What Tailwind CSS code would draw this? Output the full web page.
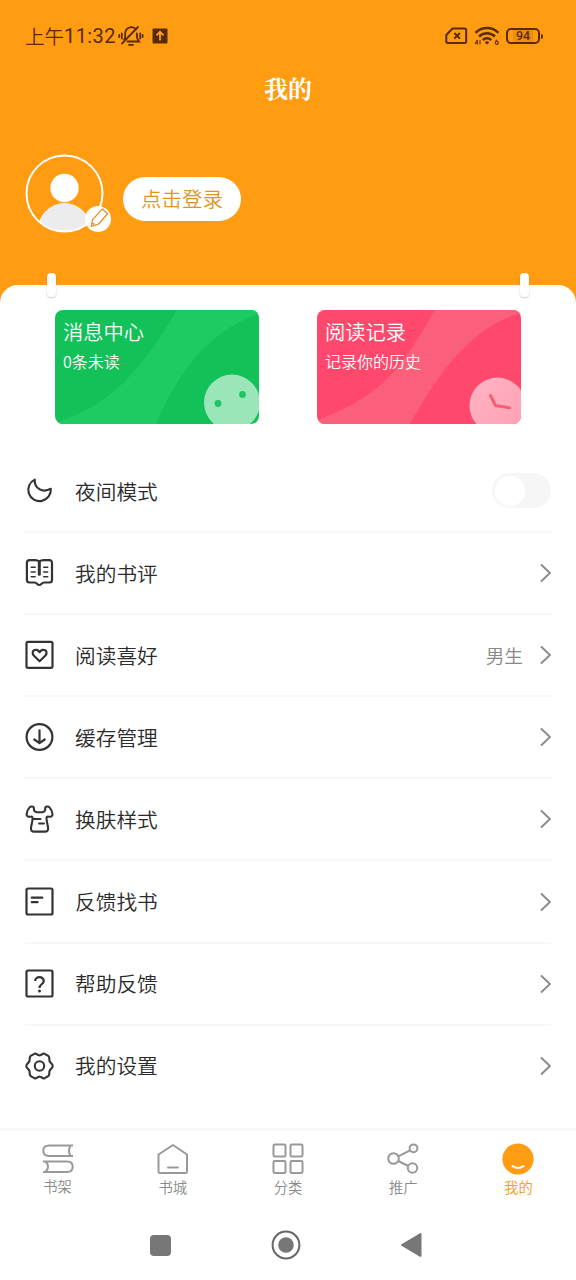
<!DOCTYPE html>
<html lang="zh-CN">
<head>
<meta charset="utf-8">
<title>我的</title>
<script src="https://cdn.jsdelivr.net/npm/@tailwindcss/browser@4"></script>
</head>
<body class="bg-[#ff9c12]">
<div class="flex h-[1280px] w-[576px] flex-col overflow-hidden bg-[#ff9c12] font-['Noto_Sans_CJK_SC',sans-serif] font-[350]">

  <header class="flex h-[285px] shrink-0 flex-col">
    <!-- status bar -->
    <div class="flex h-[72px] items-center pl-[25px] text-[#5a2a02]">
      <span class="flex w-[90px] items-center whitespace-nowrap leading-none"><span class="text-[19.5px]">上午</span><span class="font-[Roboto] text-[20px] font-normal tracking-[0.4px]">11:32</span></span>
      <svg class="ml-[3px]" width="26" height="24" viewBox="0 0 26 24" fill="none" stroke="currentColor" stroke-width="1.8" stroke-linecap="round"><path d="M6.2 15.5C8 13.5 6.800 11 7.300 8.300 8.300 3 15 1.500 18 5.500M18.800 9.500C18.600 13 19 15 21 17.500H9.500M20 3L4 19.500M11 20.800h4M3.800 9.500v5M1.200 11v2M22.200 9.500v5M24.600 11v2"/></svg>
      <svg class="ml-2" width="16" height="16" viewBox="0 0 16 16"><rect x=".5" y=".5" width="15" height="15" rx="1" fill="#5a2a02"/><path d="M8 12.500V4M4.500 7.300L8 3.800l3.500 3.500" fill="none" stroke="#ffa42a" stroke-width="1.700"/></svg>
      <svg class="ml-[277px]" width="23" height="18" viewBox="0 0 23 18" fill="none" stroke="currentColor" stroke-width="2"><path d="M7.500 1.500H19.500Q21.200 1.500 21.200 3V14.500Q21.200 16 19.500 16H3Q1.300 16 1.300 14.500V8Z" stroke-linejoin="round"/><path d="M9.300 6l5.600 5.600M14.900 6L9.300 11.600"/></svg>
      <svg class="ml-[6px]" width="27" height="20" viewBox="0 0 27 20" fill="none" stroke="currentColor" stroke-width="2.500"><path d="M1.500 6.800C8 .400 18 .400 24.500 6.800M5 10.500C9.500 6.200 16.500 6.200 21 10.500M8.700 14C11.500 11.700 14.500 11.700 17.300 14"/><path d="M13 18.500l-2.300-2.300q2.300-1.800 4.600 0z" fill="currentColor" stroke="none"/><path d="M3.300 13.800v4.800M3.300 14L1 17.200h3.200M6 14v4.500" stroke-width="1"/><path d="M23.300 13.800c-1.500.800-2 2-2 3a1.500 1.500 0 1 0 .8-1.300" stroke-width="1.100"/></svg>
      <div class="ml-[5px] flex h-[16px] w-[34px] items-center justify-center rounded-[5px] border-2 border-current font-[Roboto] text-[12.5px] font-medium leading-none"><span class="rounded-[1px] bg-[#ee8c10] px-[3px]">94</span></div>
      <div class="ml-px h-[5px] w-[2px] rounded-r bg-current"></div>
    </div>

    <h1 class="flex h-[34px] items-center justify-center pb-[3px] font-['Noto_Serif_CJK_SC','Source_Han_Serif_SC','Noto_Sans_CJK_SC',serif] text-[24px] font-bold leading-none text-white">我的</h1>

    <div class="flex items-start pl-[25px] pt-[48px]">
      <div class="relative h-[79px] w-[79px]">
        <svg width="79" height="79" viewBox="0 0 79 79"><defs><clipPath id="face"><circle cx="39.500" cy="39.500" r="38"/></clipPath></defs><g clip-path="url(#face)"><ellipse cx="39.500" cy="79" rx="27.500" ry="30" fill="#ececec"/></g><circle cx="39.500" cy="34" r="14.200" fill="#fff"/><circle cx="39.500" cy="39.500" r="38" fill="none" stroke="#fff" stroke-width="2"/></svg>
        <svg class="absolute left-[60px] top-[52px]" width="26" height="26" viewBox="0 0 26 26"><circle cx="13" cy="13" r="13" fill="#fff"/><g transform="translate(13.300 12.700) rotate(42)" fill="none" stroke="#e0912a" stroke-width="1.300" stroke-linejoin="round"><path d="M-3.600-9.300Q-3.600-10 -2.800-10H2.800Q3.600-10 3.600-9.300V4.500L0 10.500-3.600 4.500Z"/><path d="M-1.600 8L0 6.500 1.600 8"/></g></svg>
      </div>
      <button class="ml-[19px] mt-[23px] flex h-[44px] w-[118px] items-center justify-center rounded-full bg-white pb-px text-[20.5px] leading-none text-[#e0951f]">点击登录</button>
    </div>
  </header>

  <main class="relative flex grow flex-col rounded-t-[18px] bg-white">
    <div class="absolute -top-[12px] left-[47px] h-[24px] w-[9px] rounded-[4px] bg-white shadow-[0_1px_2px_rgba(0,0,0,0.2)]"></div>
    <div class="absolute -top-[12px] left-[520px] h-[24px] w-[9px] rounded-[4px] bg-white shadow-[0_1px_2px_rgba(0,0,0,0.2)]"></div>

    <section class="flex justify-between pl-[55px] pr-[55px] pt-[25px]">
      <div class="relative h-[114px] w-[204px] overflow-hidden rounded-[8px] bg-[#12c158]">
        <svg class="absolute inset-0" width="204" height="114" viewBox="0 0 204 114"><path d="M8 110C62 92 92 50 122 0H204V4C150 22 122 66 101 114H0Z" fill="#1ecb62"/><circle cx="177" cy="92.500" r="28" fill="#9ae6b9"/><circle cx="163" cy="93.500" r="3.400" fill="#1cc567"/><circle cx="187.500" cy="84.500" r="3.400" fill="#1cc567"/></svg>
        <div class="relative pl-2 text-white"><div class="pt-[10px] text-[20.3px] leading-[22px]">消息中心</div><div class="pt-[9px] text-[16px] leading-[20px]">0条未读</div></div>
      </div>
      <div class="relative h-[114px] w-[204px] overflow-hidden rounded-[8px] bg-[#ff486c]">
        <svg class="absolute inset-0" width="204" height="114" viewBox="0 0 204 114"><defs><linearGradient id="clock" x1="0" y1="0" x2="1" y2="1"><stop offset="0" stop-color="#ffb4c4"/><stop offset="1" stop-color="#ff9fb2"/></linearGradient></defs><path d="M8 107C62 86 84 60 118 0H204V3C150 18 118 70 93 114H0V111Z" fill="#fa6079"/><circle cx="180.500" cy="95.500" r="28" fill="url(#clock)"/><path d="M173.500 85.500l5 10 14 2.200" fill="none" stroke="#f95c79" stroke-width="3" stroke-linecap="round" stroke-linejoin="round"/></svg>
        <div class="relative pl-2 text-white"><div class="pt-[10px] text-[20.3px] leading-[22px]">阅读记录</div><div class="pt-[9px] text-[16px] leading-[20px]">记录你的历史</div></div>
      </div>
    </section>

    <ul class="ml-[25px] mr-[25px] mt-[27px] flex flex-col text-[20.7px] leading-none text-[#2b2b2b]">
      <li class="flex h-[82.1px] items-center gap-5 border-b-2 border-[#f7f7f7]">
        <svg width="30" height="30" viewBox="0 0 30 30" fill="none" stroke="#333" stroke-width="2.100" stroke-linejoin="round"><path d="M9.800 3.600A11.300 11.300 0 1 0 25.800 12.700C17.500 17.500 9 12 9.800 3.600Z"/></svg>
        <span class="grow">夜间模式</span>
        <span class="mb-px flex h-[35px] w-[59px] items-center rounded-full bg-[#f6f6f6] pl-[3px]"><span class="size-[30px] rounded-full bg-white"></span></span>
      </li>
      <li class="flex h-[82.1px] items-center gap-5 border-b-2 border-[#f7f7f7]">
        <svg width="30" height="30" viewBox="0 0 30 30" fill="none" stroke="#333" stroke-width="2.200" stroke-linejoin="round" stroke-linecap="round"><path d="M14.300 3.500C13 2.400 11.500 2.200 10 2.200H4.500Q1.900 2.200 1.900 5V22Q1.900 24.500 4.500 24.500H9.500C12 24.500 12 27 14.300 27S16.600 24.500 19.100 24.500H24.500Q27 24.500 27 22V5Q27 2.200 24.500 2.200H18.800C17 2.200 15.500 2.500 14.300 3.500Z"/><path d="M14.300 4.500V16.200" stroke-width="3"/><path d="M6.200 9.300h4M6.200 14h4M6.200 18.700h4M18.700 9.300h4M18.700 14h4M18.700 18.700h4" stroke-width="1.500"/></svg>
        <span class="grow">我的书评</span>
        <svg width="11" height="20" viewBox="0 0 11 20" fill="none" stroke="#888" stroke-width="1.900"><path d="M1 1.500L10 10 1 18.500"/></svg>
      </li>
      <li class="flex h-[82.1px] items-center gap-5 border-b-2 border-[#f7f7f7]">
        <svg width="30" height="30" viewBox="0 0 30 30" fill="none" stroke="#333" stroke-width="2.200" stroke-linejoin="round"><rect x="1.500" y="1.800" width="26" height="26" rx="1.500"/><path d="M14.600 21.300L9 15.800C4.800 11 11.500 7 14.600 12.200 17.700 7 24.400 11 20.200 15.800Z"/></svg>
        <span class="grow">阅读喜好</span>
        <span class="-mr-[3px] text-[18.700px] text-[#888]">男生</span>
        <svg width="11" height="20" viewBox="0 0 11 20" fill="none" stroke="#888" stroke-width="1.900"><path d="M1 1.500L10 10 1 18.500"/></svg>
      </li>
      <li class="flex h-[82.1px] items-center gap-5 border-b-2 border-[#f7f7f7]">
        <svg width="30" height="30" viewBox="0 0 30 30" fill="none" stroke="#333" stroke-width="2.200" stroke-linecap="round" stroke-linejoin="round"><circle cx="14.500" cy="15" r="12.900"/><path d="M14.500 8.300V20.800M9.300 17.500L14.500 21.200 19.700 17.500"/></svg>
        <span class="grow">缓存管理</span>
        <svg width="11" height="20" viewBox="0 0 11 20" fill="none" stroke="#888" stroke-width="1.900"><path d="M1 1.500L10 10 1 18.500"/></svg>
      </li>
      <li class="flex h-[82.1px] items-center gap-5 border-b-2 border-[#f7f7f7]">
        <svg width="30" height="30" viewBox="0 0 30 30" fill="none" stroke="#333" stroke-width="2.100" stroke-linecap="round" stroke-linejoin="round"><path d="M8.900 4.800C9.300 2.300 6 1.800 4.400 3.600 2.500 5.700 1.700 8.300 1.600 10.300 1.600 12.300 3 12.900 5.500 12.700 7.300 12.500 7.700 13 7.600 14.500 7.400 18 6.400 20.500 6 24 5.700 26.500 7 27.600 9 27.600H20C22 27.600 23.400 26.500 23.100 24 22.700 20.500 21.700 18 21.500 14.500 21.400 13 21.800 12.500 23.600 12.700 26.100 12.900 27.500 12.300 27.500 10.300 27.400 8.300 26.600 5.700 24.700 3.600 23.100 1.800 19.800 2.300 20.200 4.800 20.500 7.500 18.500 8.300 14.500 8.300S8.600 7.500 8.900 4.800Z"/><path d="M8.500 15h7M14 19.500h5" stroke-width="1.900"/></svg>
        <span class="grow">换肤样式</span>
        <svg width="11" height="20" viewBox="0 0 11 20" fill="none" stroke="#888" stroke-width="1.900"><path d="M1 1.500L10 10 1 18.500"/></svg>
      </li>
      <li class="flex h-[82.1px] items-center gap-5 border-b-2 border-[#f7f7f7]">
        <svg width="30" height="30" viewBox="0 0 30 30" fill="none" stroke="#333" stroke-width="2.200" stroke-linecap="round" stroke-linejoin="round"><rect x="1.500" y="1.500" width="26" height="26" rx="1.500"/><path d="M6.800 10.700h10.500M6.800 15.200h5.800"/></svg>
        <span class="grow">反馈找书</span>
        <svg width="11" height="20" viewBox="0 0 11 20" fill="none" stroke="#888" stroke-width="1.900"><path d="M1 1.500L10 10 1 18.500"/></svg>
      </li>
      <li class="flex h-[82.1px] items-center gap-5 border-b-2 border-[#f7f7f7]">
        <svg width="30" height="30" viewBox="0 0 30 30" fill="none" stroke="#333" stroke-width="2.200" stroke-linejoin="round"><rect x="1.500" y="1.500" width="26" height="26" rx="1.500"/><path d="M10.200 12C10.200 6.800 18.800 6.800 18.800 12 18.800 15 14.500 15.100 14.500 19"/><circle cx="14.500" cy="21.900" r="1.500" fill="#333" stroke="none"/></svg>
        <span class="grow">帮助反馈</span>
        <svg width="11" height="20" viewBox="0 0 11 20" fill="none" stroke="#888" stroke-width="1.900"><path d="M1 1.500L10 10 1 18.500"/></svg>
      </li>
      <li class="flex h-[80.1px] items-center gap-5">
        <svg width="30" height="30" viewBox="0 0 30 30" fill="none" stroke="#333" stroke-width="2.100" stroke-linejoin="round"><path d="M27.300 13.600Q28 15 27.300 16.400L24.700 19.500Q24.300 20.500 24.200 23.600 23.800 25 22.300 25.700L19.700 27.200Q18.500 27.700 17.500 27L15.700 25.900Q14.500 25.400 13.300 25.900L11.500 27Q10.500 27.700 9.300 27.200L6.700 25.700Q5.200 25 4.800 23.600 4.700 20.500 4.300 19.500L1.700 16.400Q1 15 1.700 13.600L4.300 10.500Q4.700 9.500 4.800 6.400 5.200 5 6.700 4.300L9.300 2.800Q10.500 2.300 11.500 3L13.300 4.100Q14.500 4.600 15.700 4.100L17.500 3Q18.500 2.300 19.700 2.800L22.300 4.300Q23.800 5 24.200 6.400 24.300 9.500 24.700 10.500Z"/><circle cx="14.500" cy="15" r="4.700"/></svg>
        <span class="grow">我的设置</span>
        <svg width="11" height="20" viewBox="0 0 11 20" fill="none" stroke="#888" stroke-width="1.900"><path d="M1 1.500L10 10 1 18.500"/></svg>
      </li>
    </ul>

    <footer class="mt-auto flex h-[152px] flex-col border-t-[3px] border-[#f8f8f8]">
      <nav class="grid h-[77px] grid-cols-5 pt-[11px] text-[14.300px] leading-[18px] text-[#8a8a8a]">
        <a class="flex flex-col items-center">
          <svg width="32" height="34" viewBox="0 0 32 34" fill="none" stroke="#999" stroke-width="2"><path d="M31 3.500H7Q1.300 3.500 1.300 8.700T7 14H31M28.500 3.500Q25.500 8.700 28.500 14M1 19.500H25Q30.700 19.500 30.700 24.700T25 30H1M3.500 19.500Q8.500 24.700 3.500 30"/></svg>
          <span class="mt-px">书架</span></a>
        <a class="flex flex-col items-center">
          <svg width="32" height="34" viewBox="0 0 32 34" fill="none" stroke="#999" stroke-width="2" stroke-linejoin="round" stroke-linecap="round"><path d="M16 3L30 12.500V29.500Q30 31 28.500 31H3Q1.500 31 1.500 29.500V12.500Z"/><path d="M11 25.500h10"/></svg>
          <span class="mt-0.5">书城</span></a>
        <a class="flex flex-col items-center">
          <svg width="32" height="34" viewBox="0 0 32 34" fill="none" stroke="#999" stroke-width="2"><rect x="1.500" y="2.500" width="12" height="12" rx="1.200"/><rect x="18.500" y="2.500" width="12" height="12" rx="1.200"/><rect x="1.500" y="19" width="12" height="12" rx="1.200"/><rect x="18.500" y="19" width="12" height="12" rx="1.200"/></svg>
          <span class="mt-0.5">分类</span></a>
        <a class="flex flex-col items-center">
          <svg width="32" height="34" viewBox="0 0 32 34" fill="none" stroke="#999" stroke-width="2"><circle cx="6.500" cy="16.500" r="5.300"/><circle cx="26.500" cy="6.300" r="3.900"/><circle cx="25.500" cy="26" r="4.700"/><path d="M11.300 14.300L23 8.300M11 19l10.500 5"/></svg>
          <span class="mt-0.5">推广</span></a>
        <a class="flex flex-col items-center text-[#f09a1c]">
          <svg width="32" height="34" viewBox="0 0 32 34" fill="none"><circle cx="16" cy="17" r="15.600" fill="#ff9c12"/><path d="M10.500 24Q16 28 21.500 24" stroke="#fff" stroke-width="2" stroke-linecap="round"/></svg>
          <span class="mt-0.5">我的</span></a>
      </nav>
      <div class="flex h-[72px] items-center pl-[150px] pt-[2px]">
        <span class="size-[21px] rounded-[4px] bg-[#777]"></span>
        <svg class="ml-[100px]" width="30" height="30" viewBox="0 0 30 30"><circle cx="15" cy="15" r="13.400" fill="none" stroke="#666" stroke-width="2"/><circle cx="15" cy="15" r="7.800" fill="#777"/></svg>
        <svg class="ml-[99px]" width="22" height="26" viewBox="0 0 22 26"><path d="M20.500 2V24L2 13Z" fill="#777" stroke="#777" stroke-width="2" stroke-linejoin="round"/></svg>
      </div>
    </footer>
  </main>
</div>
</body>
</html>
